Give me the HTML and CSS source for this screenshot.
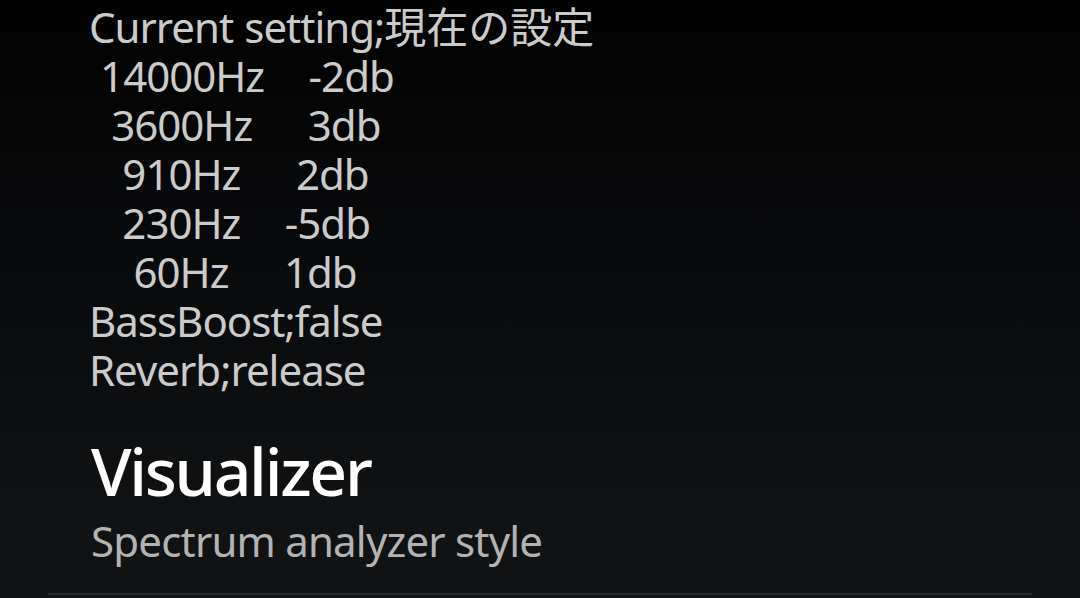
FILE: index.html
```html
<!DOCTYPE html>
<html lang="ja">
<head>
<meta charset="utf-8">
<title>Equalizer settings</title>
<link rel="stylesheet" href="styles.css">
</head>
<body>
<div class="screen">
  <div class="eq-info">
    <div class="eq-line">Current setting;<span class="ja">現在の設定</span></div>
    <div class="eq-line"> 14000Hz    -2db</div>
    <div class="eq-line">  3600Hz     3db</div>
    <div class="eq-line">   910Hz     2db</div>
    <div class="eq-line">   230Hz    -5db</div>
    <div class="eq-line">    60Hz     1db</div>
    <div class="eq-line">BassBoost;false</div>
    <div class="eq-line">Reverb;release</div>
  </div>
  <div class="pref">
    <div class="pref-title">Visualizer</div>
    <div class="pref-summary">Spectrum analyzer style</div>
  </div>
  <div class="divider"></div>
</div>
</body>
</html>
```
FILE: styles.css
```css
html, body {
  margin: 0;
  padding: 0;
}
body {
  width: 1080px;
  height: 598px;
  overflow: hidden;
  background: linear-gradient(to bottom, #020202 0px, #0a0b0d 300px, #111214 520px, #111214 598px);
  font-family: "Noto Sans", "Open Sans", "Noto Sans CJK JP", sans-serif;
}
.screen {
  display: flex;
  flex-direction: column;
  height: 598px;
}
.eq-info {
  padding: 0 0 0 89px;
  color: #cbcbcb;
  font-size: 42px;
  letter-spacing: -1px;
  word-spacing: 1.2px;
  line-height: 49px;
}
.eq-line {
  white-space: pre;
}
.ja {
  font-family: "Noto Sans CJK JP", sans-serif;
  letter-spacing: 0;
}
.pref {
  display: flex;
  flex-direction: column;
  padding: 36px 0 0 91px;
}
.pref-title {
  color: #ffffff;
  font-size: 66px;
  font-weight: 500;
  letter-spacing: -2.3px;
  line-height: 80px;
}
.pref-summary {
  margin-top: 5px;
  color: #b3b3b3;
  font-size: 42px;
  letter-spacing: -0.8px;
  line-height: 52px;
}
.divider {
  margin: auto 48px 3px 48px;
  height: 2px;
  background: #2b2c2f;
}
```
